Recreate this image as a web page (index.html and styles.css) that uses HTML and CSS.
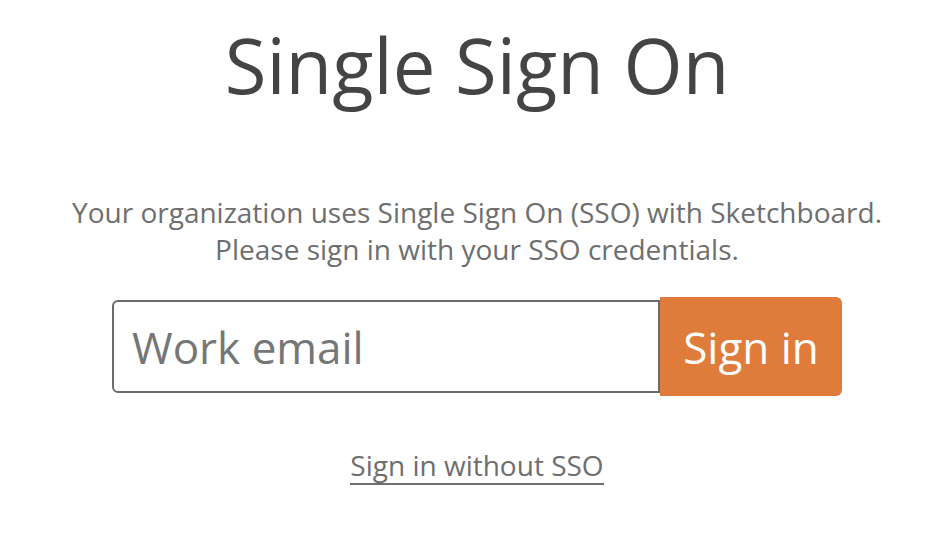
FILE: index.html
```html
<!DOCTYPE html>
<html lang="en">
<head>
<meta charset="utf-8">
<title>Single Sign On</title>
<link rel="stylesheet" href="styles.css">
</head>
<body>
<main class="page">
  <h1 class="title">Single Sign On</h1>
  <p class="intro">Your organization uses Single Sign On (SSO) with Sketchboard.<br>Please sign in with your SSO credentials.</p>
  <form class="sso-form">
    <input class="email" type="email" placeholder="Work email">
    <button class="submit" type="button">Sign in</button>
  </form>
  <a class="alt-link" href="#">Sign in without SSO</a>
</main>
</body>
</html>
```

FILE: styles.css
```css
html, body {
  margin: 0;
  padding: 0;
  background: #ffffff;
}

body {
  font-family: "Open Sans", "DejaVu Sans", sans-serif;
}

.page {
  box-sizing: border-box;
  display: flex;
  flex-direction: column;
  align-items: center;
  width: 950px;
  padding-left: 4px;
}

.title {
  margin: 18px 0 0;
  font-size: 76px;
  line-height: 94px;
  font-weight: 400;
  color: #444444;
}

.intro {
  margin: 82px 0 0;
  font-size: 28px;
  line-height: 37px;
  color: #6e6e6e;
  text-align: center;
  white-space: nowrap;
}

.sso-form {
  display: flex;
  align-items: center;
  margin: 29px 0 0;
}

.email {
  box-sizing: border-box;
  width: 548px;
  height: 93px;
  border: 2px solid #6b6b6b;
  border-radius: 6px 0 0 6px;
  padding: 0 18px;
  font-family: "Open Sans", "DejaVu Sans", sans-serif;
  font-size: 44px;
  color: #444444;
  outline: none;
}

.email::placeholder {
  color: #767676;
  opacity: 1;
}

.submit {
  box-sizing: border-box;
  width: 182px;
  height: 99px;
  border: 0;
  border-radius: 0 6px 6px 0;
  background: #e07c3b;
  color: #ffffff;
  font-family: "Open Sans", "DejaVu Sans", sans-serif;
  font-size: 44px;
  padding: 0;
}

.alt-link {
  margin: 51px 0 0;
  font-size: 28px;
  line-height: 36px;
  color: #6e6e6e;
  text-decoration: none;
  border-bottom: 2px solid #6e6e6e;
}
```
